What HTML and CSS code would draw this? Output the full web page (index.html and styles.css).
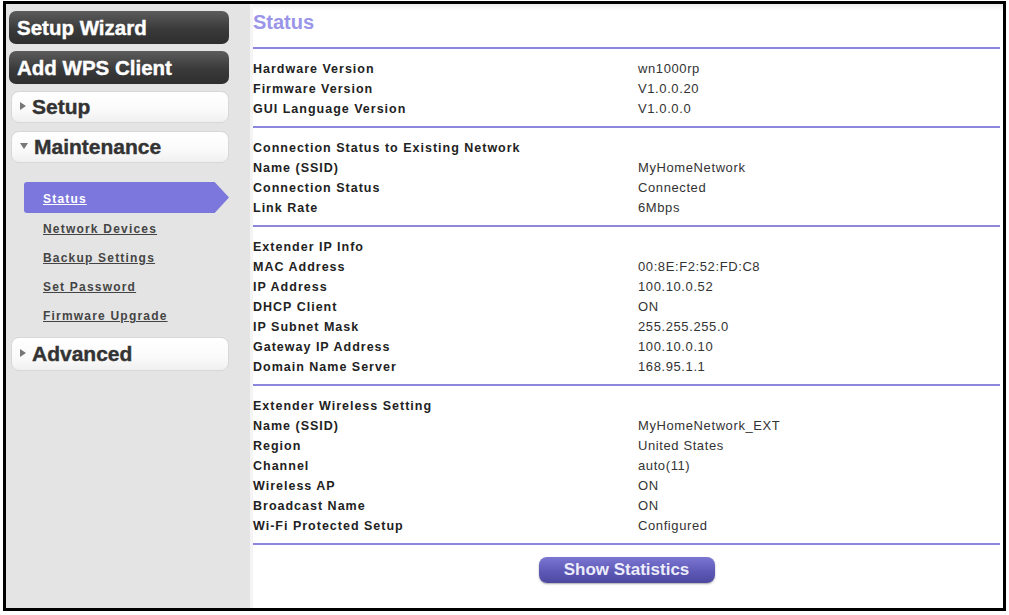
FILE: index.html
```html
<!DOCTYPE html>
<html>
  <head>
    <meta charset="UTF-8">
    <title>Status</title>
    <link rel="stylesheet" href="styles.css">
  </head>
  <body>
    <div class="frame">
      <div class="sidebar">
        <div class="btn-dark">Setup Wizard</div>
        <div class="btn-dark">Add WPS Client</div>
        <div class="btn-light"><span class="tri tri-right"></span>Setup</div>
        <div class="btn-light"><span class="tri tri-down"></span>Maintenance</div>
        <ul class="submenu">
          <li class="active"><a href="#">Status</a></li>
          <li><a href="#">Network Devices</a></li>
          <li><a href="#">Backup Settings</a></li>
          <li><a href="#">Set Password</a></li>
          <li><a href="#">Firmware Upgrade</a></li>
        </ul>
        <div class="btn-light btn-advanced"><span class="tri tri-right"></span>Advanced</div>
      </div>

      <div class="content">
        <h1>Status</h1>

        <div class="section">
          <div class="row"><span class="label">Hardware Version</span><span class="value">wn1000rp</span></div>
          <div class="row"><span class="label">Firmware Version</span><span class="value">V1.0.0.20</span></div>
          <div class="row"><span class="label">GUI Language Version</span><span class="value">V1.0.0.0</span></div>
        </div>

        <div class="section">
          <div class="row"><span class="label">Connection Status to Existing Network</span></div>
          <div class="row"><span class="label">Name (SSID)</span><span class="value">MyHomeNetwork</span></div>
          <div class="row"><span class="label">Connection Status</span><span class="value">Connected</span></div>
          <div class="row"><span class="label">Link Rate</span><span class="value">6Mbps</span></div>
        </div>

        <div class="section">
          <div class="row"><span class="label">Extender IP Info</span></div>
          <div class="row"><span class="label">MAC Address</span><span class="value">00:8E:F2:52:FD:C8</span></div>
          <div class="row"><span class="label">IP Address</span><span class="value">100.10.0.52</span></div>
          <div class="row"><span class="label">DHCP Client</span><span class="value">ON</span></div>
          <div class="row"><span class="label">IP Subnet Mask</span><span class="value">255.255.255.0</span></div>
          <div class="row"><span class="label">Gateway IP Address</span><span class="value">100.10.0.10</span></div>
          <div class="row"><span class="label">Domain Name Server</span><span class="value">168.95.1.1</span></div>
        </div>

        <div class="section">
          <div class="row"><span class="label">Extender Wireless Setting</span></div>
          <div class="row"><span class="label">Name (SSID)</span><span class="value">MyHomeNetwork_EXT</span></div>
          <div class="row"><span class="label">Region</span><span class="value">United States</span></div>
          <div class="row"><span class="label">Channel</span><span class="value">auto(11)</span></div>
          <div class="row"><span class="label">Wireless AP</span><span class="value">ON</span></div>
          <div class="row"><span class="label">Broadcast Name</span><span class="value">ON</span></div>
          <div class="row"><span class="label">Wi-Fi Protected Setup</span><span class="value">Configured</span></div>
        </div>

        <div class="actions">
          <div class="btn-purple">Show Statistics</div>
        </div>
      </div>
    </div>
  </body>
</html>
```

FILE: styles.css
```css
body {
  margin: 0;
  background: #fff;
  font-family: "Liberation Sans", Arial, sans-serif;
}
.frame {
  display: flex;
  margin: 1px 3px 4px 3px;
  height: 604px;
  border: 3px solid #000;
}

/* left menu */
.sidebar {
  width: 244px;
  flex-shrink: 0;
  background: #e4e4e4;
  padding: 7px 0 0 3px;
  box-sizing: border-box;
}
.btn-dark {
  width: 220px;
  height: 33px;
  margin-bottom: 7px;
  box-sizing: border-box;
  padding-left: 8px;
  border-radius: 7px;
  background: linear-gradient(#5c5c5c, #3a3a3a 55%, #2e2e2e);
  color: #fff;
  font-size: 20.5px;
  font-weight: bold;
  line-height: 33px;
  -webkit-text-stroke: 0.4px #fff;
}
.btn-light {
  width: 218px;
  height: 32px;
  margin: 0 0 8px 2px;
  box-sizing: border-box;
  padding-left: 8px;
  border: 1px solid #d8d8d8;
  border-radius: 8px;
  background: linear-gradient(#fff, #fafafa 60%, #f0f0f0);
  color: #333;
  font-size: 21px;
  font-weight: bold;
  line-height: 30px;
  -webkit-text-stroke: 0.4px #333;
}
.btn-advanced {
  height: 34px;
  line-height: 32px;
}
.tri {
  display: inline-block;
  width: 0;
  height: 0;
  margin-right: 6px;
  vertical-align: middle;
  position: relative;
  top: -2px;
  -webkit-text-stroke: 0;
}
.tri-right {
  border-top: 4px solid transparent;
  border-bottom: 4px solid transparent;
  border-left: 6px solid #777;
}
.tri-down {
  border-left: 4px solid transparent;
  border-right: 4px solid transparent;
  border-top: 6px solid #777;
}
.submenu {
  list-style: none;
  margin: 19px 0 8px 0;
  padding: 0;
}
.submenu li {
  height: 29px;
  line-height: 29px;
  padding-left: 34px;
}
.submenu a {
  color: #444;
  font-size: 12px;
  font-weight: bold;
  letter-spacing: 1.2px;
}
.submenu li.active {
  height: 31px;
  line-height: 31px;
  width: 205px;
  margin-left: 15px;
  padding-left: 19px;
  box-sizing: border-box;
  background: #7c77dc;
  border-radius: 3px 0 0 3px;
  clip-path: polygon(0 0, 93% 0, 100% 50%, 93% 100%, 0 100%);
}
.submenu li.active a {
  color: #fff;
}

/* main panel */
.content {
  flex: 1;
  padding: 0 3px 0 0;
  background: linear-gradient(#ececec, #fff 7px);
  border-left: 3px solid #f4f4f4;
}
h1 {
  margin: 0 0 13px 0;
  padding-top: 6px;
  height: 24px;
  line-height: 24px;
  font-size: 20px;
  color: #9a95e8;
}
.section {
  border-top: 2px solid #8c87dd;
  padding: 10px 0 7px 0;
}
.row {
  display: flex;
  height: 20px;
  line-height: 20px;
  color: #222;
}
.label {
  width: 385px;
  flex-shrink: 0;
  font-size: 12.5px;
  font-weight: bold;
  letter-spacing: 1px;
}
.value {
  font-size: 13px;
  color: #333;
  letter-spacing: 0.6px;
}
.actions {
  border-top: 2px solid #8c87dd;
  padding-top: 12px;
  display: flex;
  justify-content: center;
}
.btn-purple {
  width: 176px;
  height: 26px;
  line-height: 26px;
  text-align: center;
  border-radius: 8px;
  background: linear-gradient(#7b76d2, #5c57b4 60%, #4d489f);
  box-shadow: 0 1px 2px rgba(0, 0, 0, 0.35);
  color: #ececfa;
  font-size: 17px;
  font-weight: bold;
}
```
